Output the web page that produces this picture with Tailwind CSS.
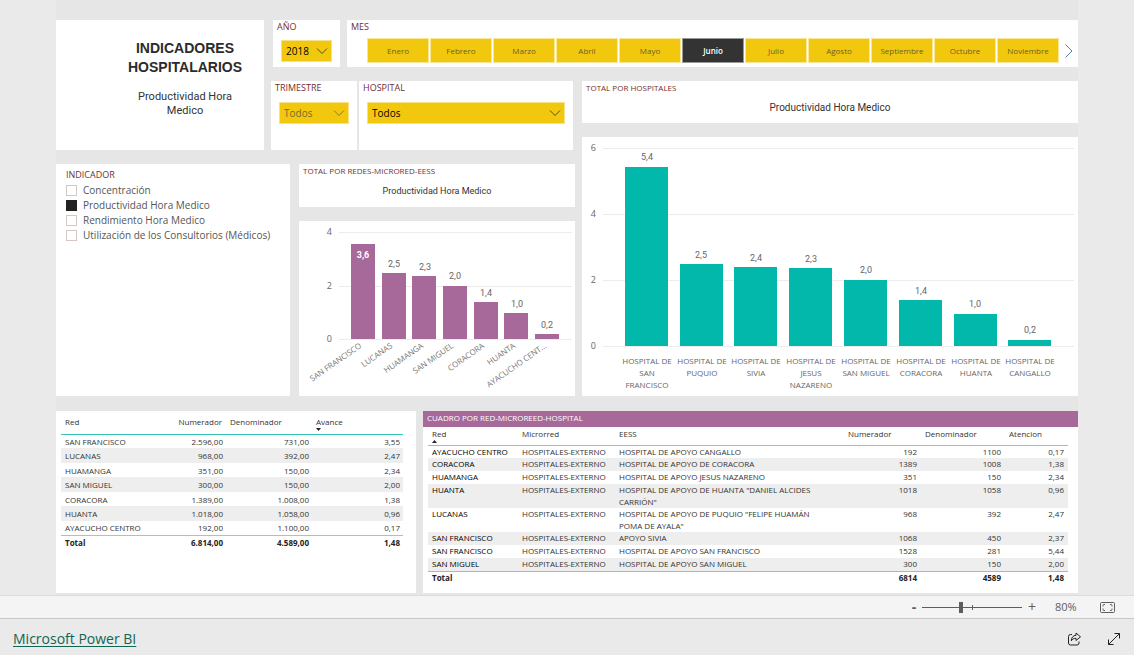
<!DOCTYPE html>
<html lang="es">
<head>
<meta charset="utf-8">
<meta name="viewport" content="width=device-width, initial-scale=1">
<title>Indicadores Hospitalarios</title>
<script src="https://cdn.jsdelivr.net/npm/@tailwindcss/browser@4"></script>
</head>
<body class="flex min-h-screen flex-col bg-[#eaeaea] font-['Open_Sans','Noto_Sans',sans-serif] text-[#333]">

<main class="grow px-14">
<div class="bg-[#e6e6e6] pt-5 pb-0.5">

<div class="grid grid-cols-[208fr_304fr_496fr] gap-x-[7px] gap-y-3.5">

  <!-- Title -->
  <header class="row-span-2 min-w-0 bg-white pt-[19px] pl-[50px] text-center">
    <h1 class="font-['Liberation_Sans',sans-serif] text-sm leading-[19px] font-bold text-[#2b2b2b]">INDICADORES<br>HOSPITALARIOS</h1>
    <p class="mx-auto mt-[13px] w-28 font-['Roboto',sans-serif] text-[11px] leading-[14px]">Productividad Hora Medico</p>
  </header>

  <!-- Year and month -->
  <div class="col-span-2 flex min-w-0 gap-[7px] pl-0.5">
    <section class="w-[67px] shrink-0 bg-white">
      <label for="anio" class="block pl-1 text-[9px] leading-[14px] text-[#722f2f]">AÑO</label>
      <div class="relative mt-1.5 ml-2 w-[51px]">
        <select id="anio" class="block h-[22px] w-full appearance-none border border-[#f7e08a] bg-[#f2c80f] pl-1 text-[10px] text-black"><option>2018</option></select>
        <svg class="pointer-events-none absolute top-2 right-1 h-1.5 w-3" viewBox="0 0 12 6" fill="none" stroke="#5a4c10"><path d="M1 .5 6 5.5 11 .5"/></svg>
      </div>
    </section>
    <section class="min-w-0 grow bg-white pb-1">
      <h2 class="pl-1 text-[9px] leading-[14px] text-[#722f2f]">MES</h2>
      <div class="mt-1 flex items-center pl-5">
        <div class="grid grow grid-cols-11 gap-px text-[8px] text-[#6b5e2a]">
          <button class="h-[25px] border border-[#f9e799] bg-[#f2c80f]">Enero</button>
          <button class="h-[25px] border border-[#f9e799] bg-[#f2c80f]">Febrero</button>
          <button class="h-[25px] border border-[#f9e799] bg-[#f2c80f]">Marzo</button>
          <button class="h-[25px] border border-[#f9e799] bg-[#f2c80f]">Abril</button>
          <button class="h-[25px] border border-[#f9e799] bg-[#f2c80f]">Mayo</button>
          <button class="h-[25px] border border-[#999] bg-[#333] font-semibold text-white" aria-pressed="true">Junio</button>
          <button class="h-[25px] border border-[#f9e799] bg-[#f2c80f]">Julio</button>
          <button class="h-[25px] border border-[#f9e799] bg-[#f2c80f]">Agosto</button>
          <button class="h-[25px] border border-[#f9e799] bg-[#f2c80f]">Septiembre</button>
          <button class="h-[25px] border border-[#f9e799] bg-[#f2c80f]">Octubre</button>
          <button class="h-[25px] border border-[#f9e799] bg-[#f2c80f]">Noviembre</button>
        </div>
        <button class="flex w-[19px] justify-center" aria-label="Siguiente"><svg class="h-3.5 w-2" viewBox="0 0 8 14" fill="none" stroke="#4f83b8"><path d="M.5.5 7 7 .5 13.500"/></svg></button>
      </div>
    </section>
  </div>

  <!-- Quarter and hospital -->
  <div class="flex min-h-[69px] min-w-0 gap-0.5 pr-0.5">
    <section class="w-[86px] shrink-0 bg-white">
      <label for="trimestre" class="block pl-1 text-[9px] leading-[14px] text-[#722f2f]">TRIMESTRE</label>
      <div class="relative mt-[7px] ml-2 w-[70px]">
        <select id="trimestre" class="block h-[22px] w-full appearance-none border border-[#f7e08a] bg-[#f2c80f] pl-1 text-[10px] text-[#77692a]"><option>Todos</option></select>
        <svg class="pointer-events-none absolute top-2 right-1 h-1.5 w-3" viewBox="0 0 12 6" fill="none" stroke="#8a7a20"><path d="M1 .5 6 5.5 11 .5"/></svg>
      </div>
    </section>
    <section class="min-w-0 grow bg-white">
      <label for="hospital" class="block pl-1 text-[9px] leading-[14px] text-[#722f2f]">HOSPITAL</label>
      <div class="relative mt-[7px] mr-2 ml-2">
        <select id="hospital" class="block h-[22px] w-full appearance-none border border-[#f7e08a] bg-[#f2c80f] pl-1 text-[10px] text-black"><option>Todos</option></select>
        <svg class="pointer-events-none absolute top-2 right-1 h-1.5 w-3" viewBox="0 0 12 6" fill="none" stroke="#5a4c10"><path d="M1 .5 6 5.5 11 .5"/></svg>
      </div>
    </section>
  </div>

  <!-- Totals by hospital -->
  <div class="row-span-2 flex min-w-0 flex-col gap-3.5">
    <section class="bg-white pb-2">
      <h2 class="pl-1 text-[8px] leading-[14px] text-[#722f2f]">TOTAL POR HOSPITALES</h2>
      <p class="mt-1.5 text-center font-['Roboto',sans-serif] text-[10px] leading-[14px]">Productividad Hora Medico</p>
    </section>
    <section class="grow bg-white">
      <svg class="block h-auto w-full" viewBox="0 0 496 259" role="img" aria-label="Productividad por hospital">
        <g stroke="#ececec"><path d="M21 11.500H492M21 77.500H492M21 143.500H492M21 209.500H492"/></g>
        <g fill="#01b8aa">
          <rect x="43" y="30" width="43" height="179"/><rect x="98" y="127" width="43" height="82"/>
          <rect x="152" y="130" width="43" height="79"/><rect x="207" y="131" width="43" height="78"/>
          <rect x="262" y="143" width="43" height="66"/><rect x="317" y="163" width="43" height="46"/>
          <rect x="372" y="177" width="43" height="32"/><rect x="426" y="203" width="43" height="6"/>
        </g>
        <g fill="#666" font-size="9" text-anchor="end"><text x="14" y="14">6</text><text x="14" y="80">4</text><text x="14" y="146">2</text><text x="14" y="212">0</text></g>
        <g class="font-['Roboto',sans-serif]" fill="#666" font-size="9" text-anchor="middle">
          <text x="65" y="23">5,4</text><text x="119" y="121">2,5</text><text x="174" y="124">2,4</text><text x="229" y="125">2,3</text>
          <text x="284" y="136">2,0</text><text x="339" y="157">1,4</text><text x="393" y="170">1,0</text><text x="448" y="196">0,2</text>
        </g>
        <g fill="#666" font-size="8" text-anchor="middle">
          <text y="227"><tspan x="65">HOSPITAL DE</tspan><tspan x="65" dy="12">SAN</tspan><tspan x="65" dy="12">FRANCISCO</tspan></text>
          <text y="227"><tspan x="120">HOSPITAL DE</tspan><tspan x="120" dy="12">PUQUIO</tspan></text>
          <text y="227"><tspan x="174">HOSPITAL DE</tspan><tspan x="174" dy="12">SIVIA</tspan></text>
          <text y="227"><tspan x="229">HOSPITAL DE</tspan><tspan x="229" dy="12">JESUS</tspan><tspan x="229" dy="12">NAZARENO</tspan></text>
          <text y="227"><tspan x="284">HOSPITAL DE</tspan><tspan x="284" dy="12">SAN MIGUEL</tspan></text>
          <text y="227"><tspan x="339">HOSPITAL DE</tspan><tspan x="339" dy="12">CORACORA</tspan></text>
          <text y="227"><tspan x="394">HOSPITAL DE</tspan><tspan x="394" dy="12">HUANTA</tspan></text>
          <text y="227"><tspan x="448">HOSPITAL DE</tspan><tspan x="448" dy="12">CANGALLO</tspan></text>
        </g>
      </svg>
    </section>
  </div>

  <!-- Indicator list and totals by network -->
  <div class="col-span-2 flex min-w-0 gap-[9px]">
    <fieldset class="w-[234px] shrink-0 bg-white pl-2.5 text-[10px] text-[#555]">
      <legend class="float-left mt-1 mb-px w-full text-[9px] leading-[14px] text-[#722f2f]">INDICADOR</legend>
      <div class="clear-both flex flex-col">
        <label class="flex h-[15px] items-center gap-1.5 whitespace-nowrap"><input type="checkbox" class="size-[11px] appearance-none border border-[#d4c8c4] bg-white checked:border-[#222] checked:bg-[#222]">Concentración</label>
        <label class="flex h-[15px] items-center gap-1.5 whitespace-nowrap"><input type="checkbox" checked class="size-[11px] appearance-none border border-[#d4c8c4] bg-white checked:border-[#222] checked:bg-[#222]">Productividad Hora Medico</label>
        <label class="flex h-[15px] items-center gap-1.5 whitespace-nowrap"><input type="checkbox" class="size-[11px] appearance-none border border-[#d4c8c4] bg-white checked:border-[#222] checked:bg-[#222]">Rendimiento Hora Medico</label>
        <label class="flex h-[15px] items-center gap-1.5 whitespace-nowrap"><input type="checkbox" class="size-[11px] appearance-none border border-[#d4c8c4] bg-white checked:border-[#222] checked:bg-[#222]">Utilización de los Consultorios (Médicos)</label>
      </div>
    </fieldset>
    <div class="flex min-w-0 grow flex-col gap-3.5">
      <section class="bg-white pb-[9px]">
        <h2 class="pl-1 text-[8px] leading-[14px] text-[#722f2f]">TOTAL POR REDES-MICRORED-EESS</h2>
        <p class="mt-1.5 text-center font-['Roboto',sans-serif] text-[9px] leading-[14px]">Productividad Hora Medico</p>
      </section>
      <section class="grow bg-white">
        <svg class="block h-auto w-full" viewBox="0 0 276 175" role="img" aria-label="Productividad por red">
          <g stroke="#ececec"><path d="M40 11.500H273M40 65.500H273M40 118.500H273"/></g>
          <g fill="#a66999">
            <rect x="52" y="23" width="24" height="95"/><rect x="83" y="52" width="24" height="66"/>
            <rect x="113" y="55" width="24" height="63"/><rect x="144" y="65" width="24" height="53"/>
            <rect x="175" y="81" width="24" height="37"/><rect x="205" y="92" width="24" height="26"/>
            <rect x="236" y="113" width="24" height="5"/>
          </g>
          <g fill="#666" font-size="9" text-anchor="end"><text x="33" y="14">4</text><text x="33" y="68">2</text><text x="33" y="121">0</text></g>
          <g class="font-['Roboto',sans-serif]" fill="#666" font-size="9" text-anchor="middle">
            <text x="64" y="37" fill="#fff" font-weight="700">3,6</text><text x="95" y="46">2,5</text><text x="126" y="49">2,3</text>
            <text x="156" y="58">2,0</text><text x="187" y="75">1,4</text><text x="218" y="86">1,0</text><text x="248" y="107">0,2</text>
          </g>
          <g fill="#777" font-size="8" text-anchor="end">
            <text transform="translate(63 126) rotate(-35)">SAN FRANCISCO</text>
            <text transform="translate(94 126) rotate(-35)">LUCANAS</text>
            <text transform="translate(125 126) rotate(-35)">HUAMANGA</text>
            <text transform="translate(155 126) rotate(-35)">SAN MIGUEL</text>
            <text transform="translate(186 126) rotate(-35)">CORACORA</text>
            <text transform="translate(217 126) rotate(-35)">HUANTA</text>
            <text transform="translate(248 126) rotate(-35)">AYACUCHO CENT...</text>
          </g>
        </svg>
      </section>
    </div>
  </div>
</div>

<!-- Tables -->
<div class="mt-[15px] grid grid-cols-[360fr_655fr] gap-[7px]">
  <section class="min-w-0 bg-white pr-[13px] pl-[5px]">
    <table class="w-full table-fixed border-collapse text-[8px] leading-[13px] [&_td]:p-0 [&_td]:px-1 [&_td]:text-right [&_td]:pr-[3px] [&_th]:px-1 [&_th]:text-left [&_th]:font-normal">
      <colgroup><col class="w-[105px]"><col class="w-[60px]"><col class="w-[86px]"><col></colgroup>
      <thead><tr class="h-[23px] align-top">
        <th class="pt-1">Red</th><th class="pt-1"><span class="float-right">Numerador</span></th><th class="pt-1">Denominador</th>
        <th class="pt-1">Avance<svg class="block h-[3px] w-[5px]" viewBox="0 0 5 3" fill="#222"><path d="M0 0H5L2.500 3z"/></svg></th>
      </tr></thead>
      <tbody class="border-t border-[#35c4b8] [&_tr]:h-[14px] [&_tr:nth-child(even)]:h-[15px] [&_tr:nth-child(even)]:bg-[#eee] [&_th]:whitespace-nowrap">
        <tr><th scope="row">SAN FRANCISCO</th><td>2.596,00</td><td>731,00</td><td>3,55</td></tr>
        <tr><th scope="row">LUCANAS</th><td>968,00</td><td>392,00</td><td>2,47</td></tr>
        <tr><th scope="row">HUAMANGA</th><td>351,00</td><td>150,00</td><td>2,34</td></tr>
        <tr><th scope="row">SAN MIGUEL</th><td>300,00</td><td>150,00</td><td>2,00</td></tr>
        <tr><th scope="row">CORACORA</th><td>1.389,00</td><td>1.008,00</td><td>1,38</td></tr>
        <tr><th scope="row">HUANTA</th><td>1.018,00</td><td>1.058,00</td><td>0,96</td></tr>
        <tr><th scope="row">AYACUCHO CENTRO</th><td>192,00</td><td>1.100,00</td><td>0,17</td></tr>
      </tbody>
      <tfoot><tr class="h-[15px] border-t border-[#80d6cd] font-bold text-[#222]"><td><span class="float-left font-bold">Total</span></td><td>6.814,00</td><td>4.589,00</td><td>1,48</td></tr></tfoot>
    </table>
  </section>

  <section class="min-w-0 bg-white pb-2">
    <h2 class="bg-[#a66999] pb-0.5 pl-1 text-[8px] leading-[14px] text-white">CUADRO POR RED-MICROREED-HOSPITAL</h2>
    <div class="pr-2.5 pl-[5px]">
    <table class="w-full table-fixed border-collapse text-[8px] leading-[12px] [&_td]:p-0 [&_td]:px-1 [&_td]:align-top [&_th]:px-1 [&_th]:text-left [&_th]:align-top [&_th]:font-normal">
      <colgroup><col class="w-[90px]"><col class="w-[97px]"><col class="w-[229px]"><col class="w-[77px]"><col class="w-[84px]"><col></colgroup>
      <thead><tr class="h-[18px]">
        <th class="pt-px">Red<svg class="block h-[3px] w-[5px]" viewBox="0 0 5 3" fill="#222"><path d="M0 3H5L2.500 0z"/></svg></th><th class="pt-px">Microrred</th><th class="pt-px">EESS</th><th class="pt-px">Numerador</th><th class="pt-px">Denominador</th><th class="pt-px">Atencion</th>
      </tr></thead>
      <tbody class="border-t border-[#c9a6c1] [&_tr]:h-[13px] [&_tr:nth-child(even)]:bg-[#eee] [&_th]:whitespace-nowrap [&_th]:text-black [&_td:nth-child(2)]:whitespace-nowrap [&_td:nth-child(3)]:pr-5 [&_td:nth-child(n+4)]:text-right">
        <tr><th scope="row">AYACUCHO CENTRO</th><td>HOSPITALES-EXTERNO</td><td>HOSPITAL DE APOYO CANGALLO</td><td>192</td><td>1100</td><td>0,17</td></tr>
        <tr><th scope="row">CORACORA</th><td>HOSPITALES-EXTERNO</td><td>HOSPITAL DE APOYO DE CORACORA</td><td>1389</td><td>1008</td><td>1,38</td></tr>
        <tr><th scope="row">HUAMANGA</th><td>HOSPITALES-EXTERNO</td><td>HOSPITAL DE APOYO JESUS NAZARENO</td><td>351</td><td>150</td><td>2,34</td></tr>
        <tr><th scope="row">HUANTA</th><td>HOSPITALES-EXTERNO</td><td>HOSPITAL DE APOYO DE HUANTA "DANIEL ALCIDES CARRIÓN"</td><td>1018</td><td>1058</td><td>0,96</td></tr>
        <tr><th scope="row">LUCANAS</th><td>HOSPITALES-EXTERNO</td><td>HOSPITAL DE APOYO DE PUQUIO "FELIPE HUAMÁN POMA DE AYALA"</td><td>968</td><td>392</td><td>2,47</td></tr>
        <tr><th scope="row">SAN FRANCISCO</th><td>HOSPITALES-EXTERNO</td><td>APOYO SIVIA</td><td>1068</td><td>450</td><td>2,37</td></tr>
        <tr><th scope="row">SAN FRANCISCO</th><td>HOSPITALES-EXTERNO</td><td>HOSPITAL DE APOYO SAN FRANCISCO</td><td>1528</td><td>281</td><td>5,44</td></tr>
        <tr><th scope="row">SAN MIGUEL</th><td>HOSPITALES-EXTERNO</td><td>HOSPITAL DE APOYO SAN MIGUEL</td><td>300</td><td>150</td><td>2,00</td></tr>
      </tbody>
      <tfoot><tr class="h-[14px] border-t border-[#c9a6c1] text-right font-bold text-[#222]"><td class="text-left">Total</td><td></td><td></td><td>6814</td><td>4589</td><td>1,48</td></tr></tfoot>
    </table>
    </div>
  </section>
</div>
</div>
</main>

<!-- Zoom bar -->
<div class="flex h-6 items-center justify-end border-t border-b border-t-[#dcdcdc] border-b-[#c6c6c6] bg-[#f4f4f4] pr-[19px] text-[#605e5c]">
  <button class="w-4 text-center text-sm leading-5 font-bold" aria-label="Reducir">-</button>
  <div class="relative flex h-4 w-[100px] items-center">
    <input type="range" min="0" max="100" value="39" aria-label="Zoom" class="h-3 w-full appearance-none bg-transparent bg-[linear-gradient(#605e5c,#605e5c)] bg-[length:100%_1px] bg-center bg-no-repeat [&::-webkit-slider-thumb]:h-[11px] [&::-webkit-slider-thumb]:w-1 [&::-webkit-slider-thumb]:appearance-none [&::-webkit-slider-thumb]:bg-[#605e5c]">
    <span class="absolute top-1.5 left-[50px] h-[5px] w-px bg-[#605e5c]"></span>
  </div>
  <button class="w-5 text-center text-sm leading-5" aria-label="Ampliar">+</button>
  <span class="w-[58px] pl-[13px] text-[11px]">80%</span>
  <button aria-label="Ajustar a la página"><svg class="h-[11px] w-[15px]" viewBox="0 0 15 11" fill="none" stroke="#605e5c"><rect x=".5" y=".5" width="14" height="10" rx="1"/><path d="M3 4.500V3.500a1 1 0 0 1 1-1H5M10 2.500h1a1 1 0 0 1 1 1V4.500M12 6.500V7.500a1 1 0 0 1-1 1H10M5 8.500H4a1 1 0 0 1-1-1V6.500"/></svg></button>
</div>

<!-- Footer -->
<footer class="flex h-9 items-center bg-[#eaeaea] pt-1 pr-[13px] pl-[13px]">
  <a href="#" class="text-sm text-[#0e6655] underline underline-offset-2">Microsoft Power BI</a>
  <button class="ml-auto" aria-label="Compartir"><svg class="h-[14px] w-[15px]" viewBox="0 0 15 14" fill="none" stroke="#222" stroke-linejoin="round"><path d="M5 2.500H3.500a2 2 0 0 0-2 2V11a2 2 0 0 0 2 2h6.500a2 2 0 0 0 2-2V9.500"/><path d="M9 1 13.500 4.800 9 8.500V6.300C6.500 6.300 5.200 7.200 4.300 8.800 4.400 5.500 6 3.500 9 3.300z"/></svg></button>
  <button class="ml-[25px]" aria-label="Pantalla completa"><svg class="size-[14px]" viewBox="0 0 14 14" fill="none" stroke="#222"><path d="M1.500 12.500 12.500 1.500M7.500 1.500H12.500V6.500M1.500 7.500V12.500H6.500"/></svg></button>
</footer>
</body>
</html>
